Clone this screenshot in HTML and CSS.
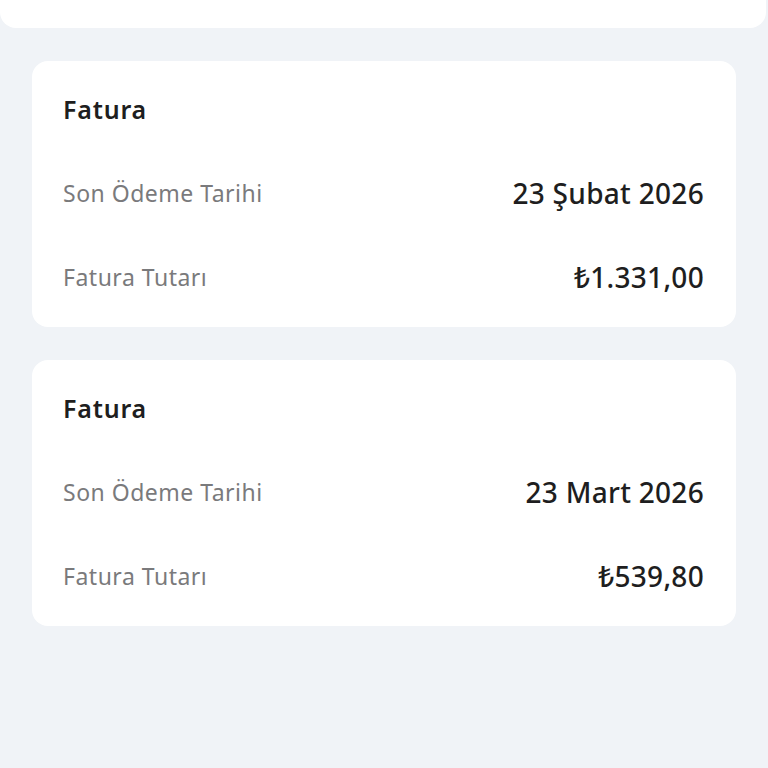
FILE: index.html
```html
<!DOCTYPE html>
<html lang="tr">
<head>
    <meta charset="UTF-8">
    <meta name="viewport" content="width=device-width, initial-scale=1.0">
    <title>Faturalar</title>
    <link rel="stylesheet" href="styles.css">
</head>
<body>
    <div class="top-card"></div>

    <div class="bill-list">
        <div class="bill-card">
            <div class="bill-title">Fatura</div>
            <div class="bill-row">
                <span class="bill-label">Son Ödeme Tarihi</span>
                <span class="bill-value">23 Şubat 2026</span>
            </div>
            <div class="bill-row">
                <span class="bill-label">Fatura Tutarı</span>
                <span class="bill-value">₺1.331,00</span>
            </div>
        </div>

        <div class="bill-card">
            <div class="bill-title">Fatura</div>
            <div class="bill-row">
                <span class="bill-label">Son Ödeme Tarihi</span>
                <span class="bill-value">23 Mart 2026</span>
            </div>
            <div class="bill-row">
                <span class="bill-label">Fatura Tutarı</span>
                <span class="bill-value">₺539,80</span>
            </div>
        </div>
    </div>
</body>
</html>
```
FILE: styles.css
```css
body {
    font-family: "Noto Sans", Roboto, sans-serif;
    margin: 0;
    background-color: #f0f3f7;
    color: #1e1e20;
}

.top-card {
    height: 28px;
    margin-right: 2px;
    background-color: white;
    border-radius: 0 0 16px 16px;
}

.bill-list {
    display: flex;
    flex-direction: column;
    gap: 33px;
    padding: 33px 32px 0;
}

.bill-card {
    background-color: white;
    border-radius: 16px;
    padding: 6px 32px 8px 31px;
}

.bill-title, .bill-row {
    height: 84px;
    display: flex;
    align-items: center;
}

.bill-title {
    font-size: 25px;
    font-weight: 600;
    letter-spacing: 0.8px;
}

.bill-row {
    justify-content: space-between;
}

.bill-label {
    font-size: 23px;
    color: #7a7a7c;
    letter-spacing: 0.5px;
}

.bill-value {
    font-size: 28px;
    font-weight: 500;
    letter-spacing: 0.3px;
}
```
